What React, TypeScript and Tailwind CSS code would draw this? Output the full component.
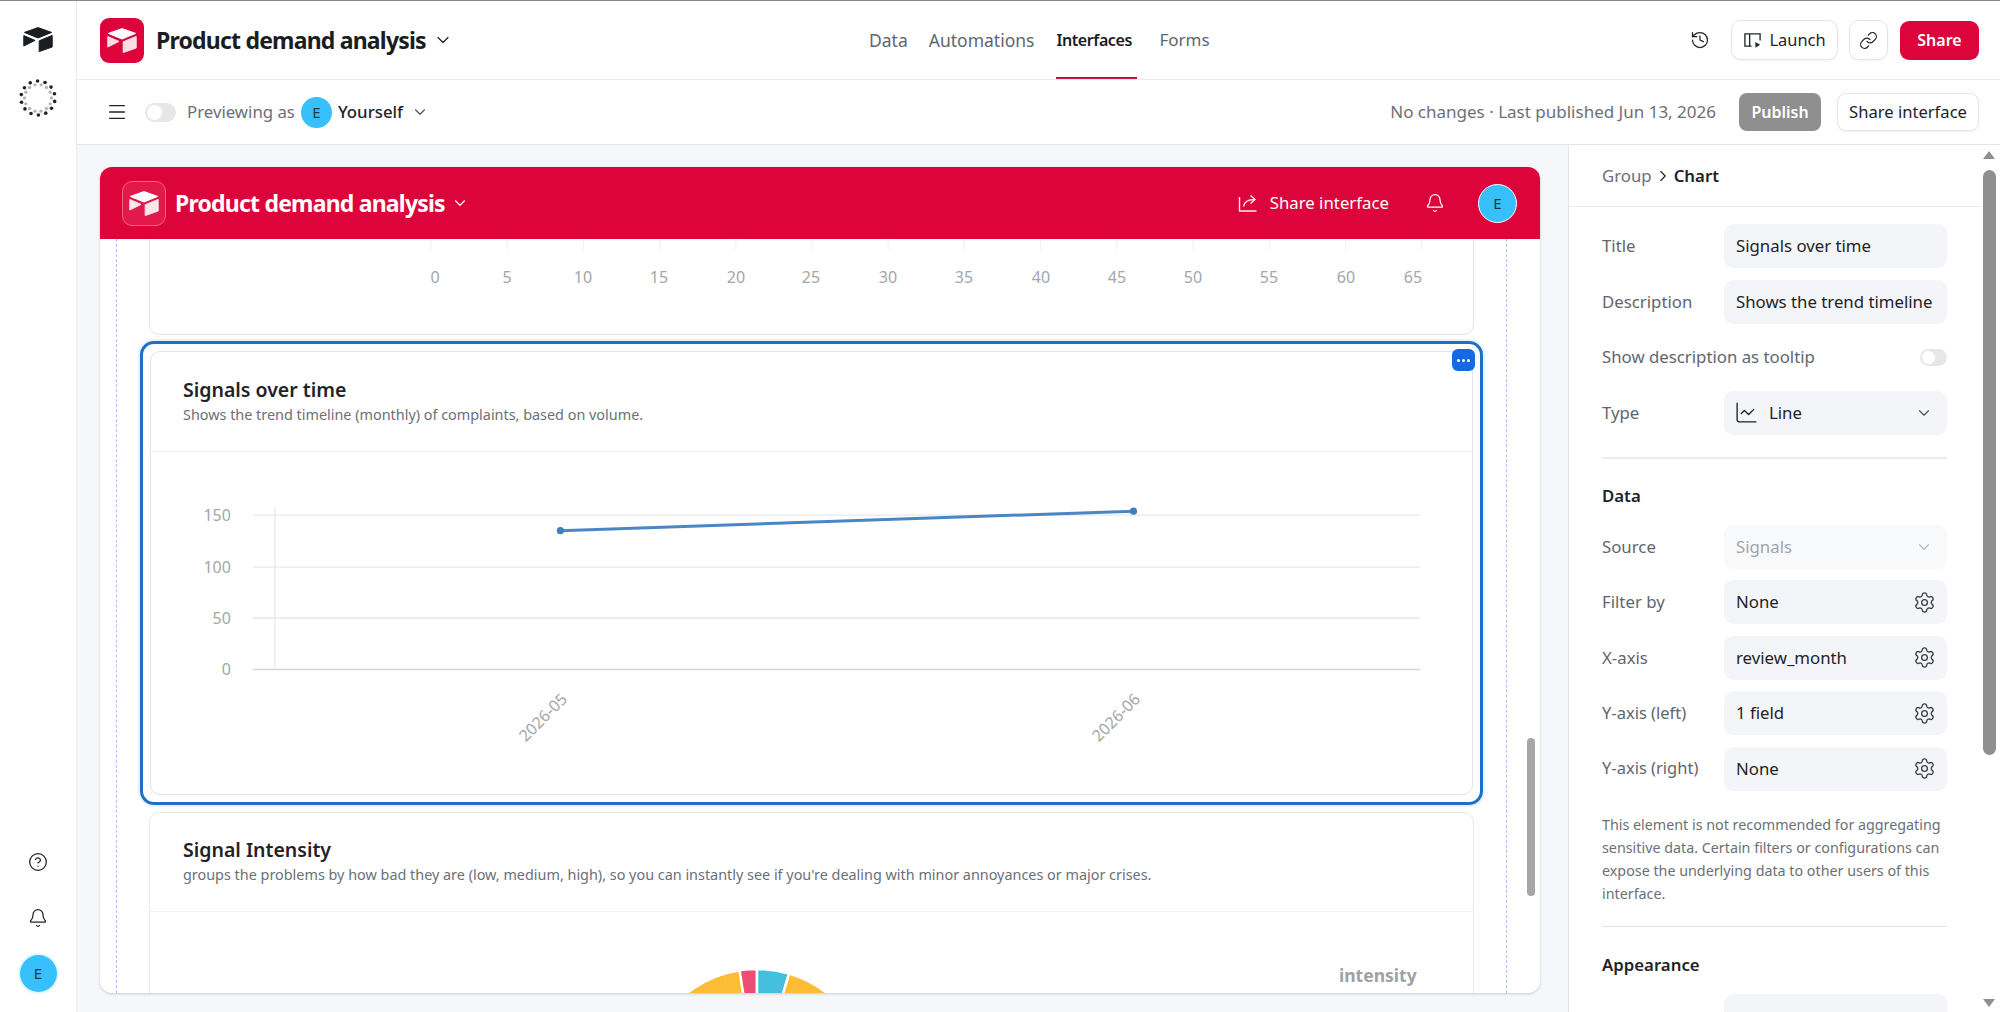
import React from 'react';
import { Bell, ChartLine, ChevronDown, ChevronRight, CircleHelp, History, Link, Menu, Settings } from 'lucide-react';

function AirtableMark({ className, top, wing }: { className?: string; top: string; wing: string }) {
  return (
    <svg viewBox="0 0 30 25" className={className}>
      <path d="M15 .6 28.6 5.4 15 11 1.4 5.4Z" fill={top} stroke={top} strokeLinejoin="round" />
      <path d="M.8 8.6 12 13.4.8 19Z" fill={wing} stroke={wing} strokeLinejoin="round" />
      <path d="M16.2 13.8 29.2 8.4V20L16.2 24.6Z" fill={wing} stroke={wing} strokeLinejoin="round" />
    </svg>
  );
}

function Spinner() {
  const dots = Array.from({ length: 14 }, (_, i) => (i / 14) * Math.PI * 2);
  return (
    <svg viewBox="-20 -20 40 40" className="h-10 w-10">
      {dots.map((a) => (
        <circle key={a} cx={Math.cos(a + 0.2) * 17} cy={Math.sin(a + 0.2) * 17} r="1.8" fill="#1f2328" />
      ))}
      {dots.map((a) => (
        <circle key={a} cx={Math.cos(a) * 13.5} cy={Math.sin(a) * 13.5} r="1.7" fill="#b4b7bb" />
      ))}
    </svg>
  );
}

function Avatar({ className }: { className: string }) {
  return <div className={`flex items-center justify-center rounded-full bg-[#37c0fb] text-[#1f3a4d] ${className}`}>E</div>;
}

function Toggle({ className }: { className: string }) {
  return (
    <div className={`flex items-center rounded-full bg-[#e6e7e9] p-[2px] ${className}`}>
      <div className="aspect-square h-full rounded-full bg-white" />
    </div>
  );
}

function Field({ label, children, muted, tight }: { label: string; children: React.ReactNode; muted?: boolean; tight?: boolean }) {
  return (
    <div className="flex h-[44px] items-center">
      <div className={`w-[122px] shrink-0 text-[#5f6670] ${tight ? 'text-[16.5px]' : ''}`}>{label}</div>
      <div className={`flex h-full w-[223px] items-center justify-between rounded-[9px] pl-[12px] pr-[11px] ${muted ? 'bg-[#f8f9fb] text-[#a0a5ac]' : 'bg-[#f3f5f8] text-[#1f2328]'}`}>
        {children}
      </div>
    </div>
  );
}

function GearField({ label, value, tight }: { label: string; value: string; tight?: boolean }) {
  return (
    <Field label={label} tight={tight}>
      <span>{value}</span>
      <Settings size={23} strokeWidth={1.4} className="text-[#3b4048]" />
    </Field>
  );
}

const TICKS = [
  [0, 435], [5, 507], [10, 583], [15, 659], [20, 736], [25, 811], [30, 888],
  [35, 964], [40, 1041], [45, 1117], [50, 1193], [55, 1269], [60, 1346], [65, 1413],
];

function App() {
  return (
    <div className="flex h-[1012px] w-[2000px] flex-col overflow-hidden border-t border-[#8a8a8a] bg-white font-['Noto_Sans',sans-serif] text-[16.8px] text-[#1f2328]">
      <div className="flex min-h-0 flex-1">
        {/* left rail */}
        <aside className="flex w-[77px] shrink-0 flex-col items-center border-r border-[#e9ebee] bg-white pt-[26px] pb-[20px]">
          <AirtableMark className="h-[25px] w-[30px]" top="#1a1d21" wing="#1a1d21" />
          <div className="mt-[26px]">
            <Spinner />
          </div>
          <div className="mt-auto flex flex-col items-center">
            <CircleHelp size={20} strokeWidth={1.5} />
            <Bell size={20} strokeWidth={1.5} className="mt-[36px]" />
            <Avatar className="mt-[27px] h-[37px] w-[37px] text-[15px] shadow-[0_0_0_2px_#e3f6ff]" />
          </div>
        </aside>

        <div className="flex min-w-0 flex-1 flex-col">
          {/* top header */}
          <header className="relative flex h-[79px] shrink-0 items-center border-b border-[#e9ebee] pl-[23px] pr-[21px]">
            <div className="flex h-[45px] w-[44px] items-center justify-center rounded-[9px] bg-[#dc043b]">
              <AirtableMark className="h-[25px] w-[30px]" top="#ffffff" wing="#fbdde6" />
            </div>
            <span className="ml-[12px] text-[23px] font-bold tracking-[-0.8px] text-[#1a1d21]">Product demand analysis</span>
            <ChevronDown size={20} strokeWidth={1.5} className="ml-[7px]" />
            <nav className="absolute left-[792px] top-0 flex h-[78px] items-center text-[17.5px] text-[#5f6670]">
              <span>Data</span>
              <span className="ml-[21px]">Automations</span>
              <span className="relative ml-[22px] flex h-full w-[81px] items-center text-[16px] font-semibold tracking-[-0.4px] text-[#1a1d21]">
                Interfaces
                <span className="absolute bottom-0 left-0 h-[2px] w-full bg-[#c4113f]" />
              </span>
              <span className="ml-[22px] text-[17px]">Forms</span>
            </nav>
            <div className="ml-auto flex items-center">
              <History size={20} strokeWidth={1.5} />
              <button className="ml-[21px] flex h-[40px] w-[107px] items-center justify-center gap-[7px] rounded-[10px] border border-[#e3e5e8] text-[16.4px] shadow-[0_1px_2px_rgba(0,0,0,0.06)]">
                <svg viewBox="0 0 20 20" className="h-[19px] w-[19px]" fill="none" stroke="#23272c" strokeWidth="1.4">
                  <path d="M9 16H2V3h16v7M7 3v13" />
                  <path d="M13 11.5v6l5-3Z" fill="#23272c" stroke="none" />
                </svg>
                Launch
              </button>
              <button className="ml-[11px] flex h-[40px] w-[39px] items-center justify-center rounded-[10px] border border-[#e3e5e8] shadow-[0_1px_2px_rgba(0,0,0,0.06)]">
                <Link size={19} strokeWidth={1.5} />
              </button>
              <button className="ml-[12px] h-[39px] w-[79px] rounded-[9px] bg-[#dc043b] text-[16px] font-semibold text-white">Share</button>
            </div>
          </header>

          {/* preview toolbar */}
          <div className="flex h-[65px] shrink-0 items-center border-b border-[#e3e5e8] pl-[29px] pr-[21px]">
            <Menu size={22} strokeWidth={1.5} />
            <Toggle className="ml-[17px] h-[19px] w-[31px]" />
            <span className="ml-[11px] text-[#6b7078]">Previewing as</span>
            <Avatar className="ml-[6px] h-[31px] w-[31px] text-[15px]" />
            <span className="ml-[6px] font-medium">Yourself</span>
            <ChevronDown size={18} strokeWidth={1.5} className="ml-[8px] text-[#4a4f57]" />
            <span className="ml-auto text-[17px] text-[#6b7078]">No changes · Last published Jun 13, 2026</span>
            <button className="ml-[23px] h-[38px] w-[82px] rounded-[8px] bg-[#8f8f8f] text-[16px] font-semibold text-white">Publish</button>
            <button className="ml-[16px] h-[38px] w-[142px] rounded-[9px] border border-[#e3e5e8] text-[16.6px] shadow-[0_1px_2px_rgba(0,0,0,0.06)]">Share interface</button>
          </div>

          <div className="flex min-h-0 flex-1">
            {/* canvas */}
            <main className="w-[1491px] shrink-0 bg-[#f5f7fa] pl-[23px] pr-[28px] pt-[22px]">
              <div className="flex h-[826px] flex-col overflow-hidden rounded-t-[12px] rounded-b-[12px] bg-white shadow-[0_1px_3px_rgba(0,0,0,0.18)]">
                <div className="flex h-[72px] shrink-0 items-center bg-[#dc043b] pl-[22px] pr-[23px] text-white">
                  <div className="flex h-[45px] w-[44px] items-center justify-center rounded-[10px] border border-[#f4607f] bg-[#e21a4c]">
                    <AirtableMark className="h-[25px] w-[30px]" top="#ffffff" wing="#fde6ec" />
                  </div>
                  <span className="ml-[9px] text-[23px] font-bold tracking-[-0.8px]">Product demand analysis</span>
                  <ChevronDown size={18} strokeWidth={1.5} className="ml-[6px]" />
                  <svg viewBox="0 0 20 20" className="ml-auto h-[20px] w-[20px]" fill="none" stroke="#fde6ec" strokeWidth="1.4">
                    <path d="M1.5 4v14h17" />
                    <path d="M5.5 13.5C6.5 8.5 10 6.5 16 6.5M12.5 2.5l4.5 4-4.5 4" />
                  </svg>
                  <span className="ml-[12px]">Share interface</span>
                  <Bell size={20} strokeWidth={1.5} className="ml-[36px]" />
                  <Avatar className="ml-[33px] h-[39px] w-[39px] border-[1.5px] border-white text-[15px]" />
                </div>

                <div className="relative min-h-0 flex-1 overflow-hidden">
                  {/* layout guides and canvas scrollbar */}
                  <div className="absolute bottom-0 left-[16px] top-0 border-l border-dashed border-[#a8c3ec]" />
                  <div className="absolute bottom-0 left-[1406px] top-0 border-l border-dashed border-[#a8c3ec]" />
                  <div className="absolute left-[1427px] top-[499px] h-[158px] w-[8px] rounded-full bg-[#a6a6a6]" />

                  <div className="-mt-[20px] ml-[49px] w-[1325px]">
                    <div className="h-[116px] rounded-[10px] border border-[#e2e3e6]">
                      <svg viewBox="150 220 1323 114" className="h-[114px] w-[1323px]">
                        {TICKS.map(([t, x], i) => (
                          <g key={t}>
                            <line x1={431 + i * 76.2} x2={431 + i * 76.2} y1="239" y2="250" stroke="#f1f1f3" />
                            <text x={x} y="283" textAnchor="middle" fontSize="16" fill="#a3a6ab">{t}</text>
                          </g>
                        ))}
                      </svg>
                    </div>

                    {/* selected chart element */}
                    <div className="relative -ml-[9px] mt-[6px] h-[464px] w-[1343px] rounded-[14px] border-[3px] border-[#1f6fc7] p-[7px] shadow-[0_0_0_2px_#e6f3ff]">
                      <button className="absolute right-[5px] top-[5px] z-10 flex h-[22px] w-[23px] items-center justify-center gap-[2px] rounded-[6px] bg-[#1668e3]">
                        <span className="h-[3px] w-[3px] rounded-full bg-white" />
                        <span className="h-[3px] w-[3px] rounded-full bg-white" />
                        <span className="h-[3px] w-[3px] rounded-full bg-white" />
                      </button>
                      <div className="h-full rounded-[10px] border border-[#e2e3e6]">
                        <div className="h-[100px] border-b border-[#f2f3f5] pl-[32px] pt-[23px]">
                          <div className="text-[19.5px] font-semibold leading-[30px]">Signals over time</div>
                          <div className="text-[14.4px] leading-[20px] text-[#6b7078]">Shows the trend timeline (monthly) of complaints, based on volume.</div>
                        </div>
                        <svg viewBox="150 452 1323 343" className="h-[343px] w-[1321px]">
                          {[515, 567, 618, 669.5].map((y, i) => (
                            <line key={y} x1="252" x2="1421" y1={y} y2={y} stroke={i === 3 ? '#d4d5d8' : '#e8e9eb'} strokeWidth="1.4" />
                          ))}
                          <line x1="274" x2="274" y1="507" y2="670" stroke="#e2e3e6" />
                          {[['150', 516], ['100', 568], ['50', 619], ['0', 670]].map(([t, y]) => (
                            <text key={t} x="230" y={Number(y) + 5} textAnchor="end" fontSize="16" fill="#a3a6ab">{t}</text>
                          ))}
                          <line x1="560" y1="530.5" x2="1134" y2="511" stroke="#4a86c5" strokeWidth="3" />
                          <circle cx="560" cy="530.5" r="3.6" fill="#3f7fc1" />
                          <circle cx="1134" cy="511" r="3.6" fill="#3f7fc1" />
                          <text x="543" y="723" textAnchor="middle" fontSize="16" fill="#a3a6ab" transform="rotate(-45 543 718)">2026-05</text>
                          <text x="1117" y="723" textAnchor="middle" fontSize="16" fill="#a3a6ab" transform="rotate(-45 1117 718)">2026-06</text>
                        </svg>
                      </div>
                    </div>

                    <div className="mt-[7px] rounded-[10px] border border-[#e8e9eb]">
                      <div className="h-[99px] border-b border-[#f2f3f5] pl-[33px] pt-[22px]">
                        <div className="text-[19.5px] font-semibold leading-[30px]">Signal Intensity</div>
                        <div className="text-[14.4px] leading-[20px] text-[#6b7078]">groups the problems by how bad they are (low, medium, high), so you can instantly see if you're dealing with minor annoyances or major crises.</div>
                      </div>
                      <svg viewBox="150 912 1323 100" className="h-[100px] w-[1323px]">
                        <g stroke="#ffffff" strokeWidth="2.5">
                          <path d="M757 1083 658.3 1026A114 114 0 0 1 739.6 970.3Z" fill="#fcbc34" />
                          <path d="M757 1083 739.6 970.3A114 114 0 0 1 757 969Z" fill="#ee4c75" />
                          <path d="M757 1083V969A114 114 0 0 1 789 973.6Z" fill="#45bfe0" />
                          <path d="M757 1083 789 973.6A114 114 0 0 1 855.7 1026Z" fill="#fcbc34" />
                        </g>
                        <text x="1339" y="982" fontSize="17.5" fontWeight="700" fill="#9ea1a6">intensity</text>
                      </svg>
                    </div>
                  </div>
                </div>
              </div>
            </main>

            {/* properties panel */}
            <aside className="flex min-w-0 flex-1 border-l border-[#e3e5e8]">
              <div className="min-w-0 flex-1">
                <div className="flex h-[62px] items-center border-b border-[#e9ebee] pl-[33px]">
                  <span className="text-[#6b7078]">Group</span>
                  <ChevronRight size={18} strokeWidth={1.5} className="mx-[2px]" />
                  <span className="font-semibold">Chart</span>
                </div>
                <div className="pl-[33px]">
                  <div className="flex flex-col gap-[11.5px] pt-[17px]">
                    <Field label="Title"><span>Signals over time</span></Field>
                    <Field label="Description"><span className="whitespace-nowrap">Shows the trend timeline</span></Field>
                    <div className="flex h-[44px] w-[345px] items-center justify-between text-[#5f6670]">
                      Show description as tooltip
                      <Toggle className="h-[17px] w-[27px]" />
                    </div>
                    <Field label="Type">
                      <span className="-ml-[2px] flex items-center gap-[10px]">
                        <ChartLine size={25} strokeWidth={1.3} />
                        Line
                      </span>
                      <ChevronDown size={18} strokeWidth={1.5} className="mr-[3px] text-[#4a4f57]" />
                    </Field>
                  </div>
                  <div className="mt-[22px] h-[2px] w-[345px] bg-[#eceef1]" />
                  <div className="mt-[25px] h-[24px] font-semibold leading-[24px]">Data</div>
                  <div className="mt-[17px] flex flex-col gap-[11.5px]">
                    <Field label="Source" muted>
                      <span>Signals</span>
                      <ChevronDown size={18} strokeWidth={1.5} className="mr-[3px] text-[#b4b8be]" />
                    </Field>
                    <GearField label="Filter by" value="None" />
                    <GearField label="X-axis" value="review_month" />
                    <GearField label="Y-axis (left)" value="1 field" tight />
                    <GearField label="Y-axis (right)" value="None" tight />
                  </div>
                  <p className="mt-[22px] w-[345px] text-[14.3px] leading-[23px] text-[#6b7078]">
                    This element is not recommended for aggregating sensitive data. Certain filters or configurations can expose the underlying data to other users of this interface.
                  </p>
                  <div className="mt-[21px] h-px w-[345px] bg-[#e3e5e8]" />
                  <div className="mt-[26px] h-[24px] font-semibold leading-[24px]">Appearance</div>
                  <div className="mt-[17px] h-[44px] w-[223px] translate-x-[122px] rounded-[9px] bg-[#f3f5f8]" />
                </div>
              </div>
              {/* panel scrollbar */}
              <div className="flex w-[19px] shrink-0 flex-col items-center pr-[3px] pt-[6px]">
                <div className="h-0 w-0 border-x-[6px] border-b-[8px] border-x-transparent border-b-[#8f8f8f]" />
                <div className="mt-[11px] h-[585px] w-[13px] rounded-full bg-[#8f8f8f]" />
                <div className="mt-[244px] h-0 w-0 border-x-[6px] border-t-[8px] border-x-transparent border-t-[#8f8f8f]" />
              </div>
            </aside>
          </div>
        </div>
      </div>
    </div>
  );
}

export default App;
